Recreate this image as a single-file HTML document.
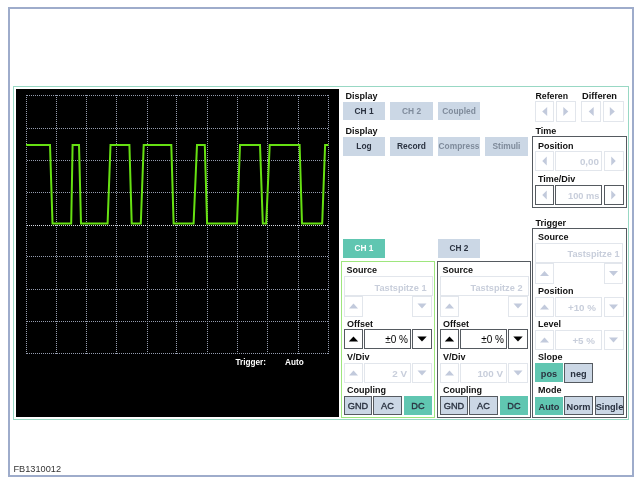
<!DOCTYPE html>
<html><head><meta charset="utf-8"><style>
html,body{margin:0;padding:0;background:#fff;width:641px;height:487px;overflow:hidden}
svg{display:block;font-family:"Liberation Sans", sans-serif;will-change:transform}
</style></head><body>
<svg width="641" height="487" viewBox="0 0 641 487" shape-rendering="crispEdges">
<rect x="9" y="8" width="624" height="468" fill="none" stroke="#9eaccb" stroke-width="2"/>
<rect x="13.5" y="86.5" width="615" height="333" fill="none" stroke="#98d8c4" stroke-width="1"/>
<rect x="16" y="89" width="323" height="328" fill="#000"/>
<line x1="26.5" y1="95" x2="26.5" y2="354" stroke="#959cae" stroke-width="1" stroke-dasharray="1,1"/>
<line x1="56.5" y1="95" x2="56.5" y2="354" stroke="#959cae" stroke-width="1" stroke-dasharray="1,1"/>
<line x1="86.5" y1="95" x2="86.5" y2="354" stroke="#959cae" stroke-width="1" stroke-dasharray="1,1"/>
<line x1="116.5" y1="95" x2="116.5" y2="354" stroke="#959cae" stroke-width="1" stroke-dasharray="1,1"/>
<line x1="147.5" y1="95" x2="147.5" y2="354" stroke="#959cae" stroke-width="1" stroke-dasharray="1,1"/>
<line x1="176.5" y1="95" x2="176.5" y2="354" stroke="#959cae" stroke-width="1" stroke-dasharray="1,1"/>
<line x1="207.5" y1="95" x2="207.5" y2="354" stroke="#959cae" stroke-width="1" stroke-dasharray="1,1"/>
<line x1="237.5" y1="95" x2="237.5" y2="354" stroke="#959cae" stroke-width="1" stroke-dasharray="1,1"/>
<line x1="267.5" y1="95" x2="267.5" y2="354" stroke="#959cae" stroke-width="1" stroke-dasharray="1,1"/>
<line x1="298.5" y1="95" x2="298.5" y2="354" stroke="#959cae" stroke-width="1" stroke-dasharray="1,1"/>
<line x1="328.5" y1="95" x2="328.5" y2="354" stroke="#959cae" stroke-width="1" stroke-dasharray="1,1"/>
<line x1="26" y1="95.5" x2="329" y2="95.5" stroke="#959cae" stroke-width="1" stroke-dasharray="1,1" stroke-dashoffset="1"/>
<line x1="26" y1="128.5" x2="329" y2="128.5" stroke="#959cae" stroke-width="1" stroke-dasharray="1,1" stroke-dashoffset="1"/>
<line x1="26" y1="160.5" x2="329" y2="160.5" stroke="#959cae" stroke-width="1" stroke-dasharray="1,1" stroke-dashoffset="1"/>
<line x1="26" y1="192.5" x2="329" y2="192.5" stroke="#959cae" stroke-width="1" stroke-dasharray="1,1" stroke-dashoffset="1"/>
<line x1="26" y1="225.5" x2="329" y2="225.5" stroke="#d8dce4" stroke-width="1" stroke-dasharray="1,1" stroke-dashoffset="1"/>
<line x1="26" y1="256.5" x2="329" y2="256.5" stroke="#959cae" stroke-width="1" stroke-dasharray="1,1" stroke-dashoffset="1"/>
<line x1="26" y1="289.5" x2="329" y2="289.5" stroke="#959cae" stroke-width="1" stroke-dasharray="1,1" stroke-dashoffset="1"/>
<line x1="26" y1="321.5" x2="329" y2="321.5" stroke="#959cae" stroke-width="1" stroke-dasharray="1,1" stroke-dashoffset="1"/>
<line x1="26" y1="353.5" x2="329" y2="353.5" stroke="#959cae" stroke-width="1" stroke-dasharray="1,1" stroke-dashoffset="1"/>
<polyline points="26,145 50,145 52.5,223.4 71.2,223.4 72.6,145 79,145 81,223.4 107.6,223.4 110.5,145 129.4,145 131.7,223.4 140.8,223.4 143.7,145 171.3,145 173.6,223.4 193.6,223.4 197,145 204.8,145 207.1,223.4 237,223.4 240,145 260,145 262.8,223.4 266.2,223.4 269.7,145 299.6,145 302,223.4 322.2,223.4 325.1,145 328.4,145" fill="none" stroke="#66e012" stroke-width="2" stroke-linejoin="miter" shape-rendering="geometricPrecision"/>
<text x="235.5" y="365" font-size="8.2" font-weight="bold" fill="#fff" text-anchor="start" >Trigger:</text>
<text x="285" y="365" font-size="8.2" font-weight="bold" fill="#fff" text-anchor="start" >Auto</text>
<text x="345.5" y="99" font-size="9" font-weight="bold" fill="#111" text-anchor="start" >Display</text>
<rect x="343" y="102" width="42" height="18" fill="#cbd7e5"/>
<text x="364.0" y="114" font-size="8.4" font-weight="bold" fill="#2a3240" text-anchor="middle" >CH 1</text>
<rect x="390" y="102" width="43" height="18" fill="#cbd7e5"/>
<text x="411.5" y="114" font-size="8.4" font-weight="bold" fill="#7f8b9b" text-anchor="middle" >CH 2</text>
<rect x="438" y="102" width="42" height="18" fill="#cbd7e5"/>
<text x="459.0" y="114" font-size="8.4" font-weight="bold" fill="#7f8b9b" text-anchor="middle" >Coupled</text>
<text x="345.5" y="133.5" font-size="9" font-weight="bold" fill="#111" text-anchor="start" >Display</text>
<rect x="343" y="137" width="42" height="19" fill="#cbd7e5"/>
<text x="364.0" y="149" font-size="8.4" font-weight="bold" fill="#2a3240" text-anchor="middle" >Log</text>
<rect x="390" y="137" width="43" height="19" fill="#cbd7e5"/>
<text x="411.5" y="149" font-size="8.4" font-weight="bold" fill="#2a3240" text-anchor="middle" >Record</text>
<rect x="438" y="137" width="42" height="19" fill="#cbd7e5"/>
<text x="459.0" y="149" font-size="8.4" font-weight="bold" fill="#7f8b9b" text-anchor="middle" >Compress</text>
<rect x="485" y="137" width="43" height="19" fill="#cbd7e5"/>
<text x="506.5" y="149" font-size="8.4" font-weight="bold" fill="#7f8b9b" text-anchor="middle" >Stimuli</text>
<text x="535.5" y="98.5" font-size="9" font-weight="bold" fill="#111" text-anchor="start" textLength="32.5" lengthAdjust="spacingAndGlyphs">Referen</text>
<text x="582" y="98.5" font-size="9" font-weight="bold" fill="#111" text-anchor="start" textLength="35" lengthAdjust="spacingAndGlyphs">Differen</text>
<rect x="535.5" y="101.5" width="18" height="20" fill="#fff" stroke="#e2e6ec" stroke-width="1"/>
<polygon points="542.2,111.5 547.2,107.0 547.2,116.0" fill="#c2cadc" shape-rendering="geometricPrecision"/>
<rect x="556.5" y="101.5" width="19" height="20" fill="#fff" stroke="#e2e6ec" stroke-width="1"/>
<polygon points="568.3,111.5 563.3,107.0 563.3,116.0" fill="#c2cadc" shape-rendering="geometricPrecision"/>
<rect x="581.5" y="101.5" width="19" height="20" fill="#fff" stroke="#e2e6ec" stroke-width="1"/>
<polygon points="588.7,111.5 593.7,107.0 593.7,116.0" fill="#c2cadc" shape-rendering="geometricPrecision"/>
<rect x="603.5" y="101.5" width="20" height="20" fill="#fff" stroke="#e2e6ec" stroke-width="1"/>
<polygon points="614.8,111.5 609.8,107.0 609.8,116.0" fill="#c2cadc" shape-rendering="geometricPrecision"/>
<text x="535.5" y="133.5" font-size="9" font-weight="bold" fill="#111" text-anchor="start" >Time</text>
<rect x="532.5" y="136.5" width="94" height="71" fill="none" stroke="#555a60" stroke-width="1"/>
<text x="538" y="148.5" font-size="9" font-weight="bold" fill="#111" text-anchor="start" >Position</text>
<rect x="535.5" y="151.5" width="18" height="19" fill="none" stroke="#e2e6ec" stroke-width="1"/>
<rect x="555.5" y="151.5" width="46" height="19" fill="none" stroke="#e2e6ec" stroke-width="1"/>
<rect x="604.5" y="151.5" width="19" height="19" fill="none" stroke="#e2e6ec" stroke-width="1"/>
<polygon points="542.25,161 546.75,156.5 546.75,165.5" fill="#c2cadc" shape-rendering="geometricPrecision"/>
<polygon points="615.75,161 611.25,156.5 611.25,165.5" fill="#c2cadc" shape-rendering="geometricPrecision"/>
<text x="599" y="165" font-size="9.8" font-weight="bold" fill="#c8cedb" text-anchor="end" >0,00</text>
<text x="538" y="182" font-size="9" font-weight="bold" fill="#111" text-anchor="start" >Time/Div</text>
<rect x="535.5" y="185.5" width="18" height="19" fill="none" stroke="#555a60" stroke-width="1"/>
<rect x="555.5" y="185.5" width="46" height="19" fill="none" stroke="#555a60" stroke-width="1"/>
<rect x="604.5" y="185.5" width="19" height="19" fill="none" stroke="#555a60" stroke-width="1"/>
<polygon points="542.25,195 546.75,190.5 546.75,199.5" fill="#c2cadc" shape-rendering="geometricPrecision"/>
<polygon points="615.75,195 611.25,190.5 611.25,199.5" fill="#c2cadc" shape-rendering="geometricPrecision"/>
<text x="599.5" y="199" font-size="9.8" font-weight="bold" fill="#c8cedb" text-anchor="end" textLength="31.5" lengthAdjust="spacingAndGlyphs">100 ms</text>
<text x="535.5" y="225.5" font-size="9" font-weight="bold" fill="#111" text-anchor="start" >Trigger</text>
<rect x="532.5" y="228.5" width="94" height="189" fill="none" stroke="#555a60" stroke-width="1"/>
<text x="538" y="239.8" font-size="9" font-weight="bold" fill="#111" text-anchor="start" >Source</text>
<rect x="535.5" y="243.5" width="87" height="19" fill="none" stroke="#e2e6ec" stroke-width="1"/>
<text x="619.5" y="257" font-size="9.2" font-weight="bold" fill="#c8cedb" text-anchor="end" >Tastspitze 1</text>
<rect x="535.5" y="263.5" width="18" height="20" fill="none" stroke="#e2e6ec" stroke-width="1"/>
<rect x="604.5" y="263.5" width="18" height="20" fill="none" stroke="#e2e6ec" stroke-width="1"/>
<polygon points="544.5,271.0 540.0,276.0 549.0,276.0" fill="#c2cadc" shape-rendering="geometricPrecision"/>
<polygon points="613.5,276.0 609.0,271.0 618.0,271.0" fill="#c2cadc" shape-rendering="geometricPrecision"/>
<text x="538" y="294" font-size="9" font-weight="bold" fill="#111" text-anchor="start" >Position</text>
<rect x="535.5" y="297.5" width="18" height="19" fill="none" stroke="#e2e6ec" stroke-width="1"/>
<rect x="555.5" y="297.5" width="46" height="19" fill="none" stroke="#e2e6ec" stroke-width="1"/>
<rect x="604.5" y="297.5" width="19" height="19" fill="none" stroke="#e2e6ec" stroke-width="1"/>
<polygon points="544.5,304.5 540.0,309.5 549.0,309.5" fill="#c2cadc" shape-rendering="geometricPrecision"/>
<polygon points="613.5,309.5 609.0,304.5 618.0,304.5" fill="#c2cadc" shape-rendering="geometricPrecision"/>
<text x="596" y="311" font-size="9.8" font-weight="bold" fill="#c8cedb" text-anchor="end" >+10 %</text>
<text x="538" y="327" font-size="9" font-weight="bold" fill="#111" text-anchor="start" >Level</text>
<rect x="535.5" y="330.5" width="18" height="19" fill="none" stroke="#e2e6ec" stroke-width="1"/>
<rect x="555.5" y="330.5" width="46" height="19" fill="none" stroke="#e2e6ec" stroke-width="1"/>
<rect x="604.5" y="330.5" width="19" height="19" fill="none" stroke="#e2e6ec" stroke-width="1"/>
<polygon points="544.5,337.5 540.0,342.5 549.0,342.5" fill="#c2cadc" shape-rendering="geometricPrecision"/>
<polygon points="613.5,342.5 609.0,337.5 618.0,337.5" fill="#c2cadc" shape-rendering="geometricPrecision"/>
<text x="595" y="344" font-size="9.8" font-weight="bold" fill="#c8cedb" text-anchor="end" >+5 %</text>
<text x="538" y="360" font-size="9" font-weight="bold" fill="#111" text-anchor="start" >Slope</text>
<rect x="535" y="363" width="28" height="19" fill="#60c6b1"/>
<text x="549.0" y="376.5" font-size="9.2" font-weight="bold" fill="#2a3240" text-anchor="middle" >pos</text>
<rect x="564.5" y="363.5" width="28" height="19" fill="#cbd7e5" stroke="#555a60" stroke-width="1"/>
<text x="578.5" y="376.5" font-size="9.2" font-weight="bold" fill="#2a3240" text-anchor="middle" >neg</text>
<text x="538" y="393" font-size="9" font-weight="bold" fill="#111" text-anchor="start" >Mode</text>
<rect x="535" y="397" width="28" height="18" fill="#60c6b1"/>
<text x="549.0" y="410" font-size="9.2" font-weight="bold" fill="#2a3240" text-anchor="middle" >Auto</text>
<rect x="564.5" y="396.5" width="28" height="18" fill="#cbd7e5" stroke="#555a60" stroke-width="1"/>
<text x="578.5" y="410" font-size="9.2" font-weight="bold" fill="#2a3240" text-anchor="middle" >Norm</text>
<rect x="595.5" y="396.5" width="28" height="18" fill="#cbd7e5" stroke="#555a60" stroke-width="1"/>
<text x="609.5" y="410" font-size="9.2" font-weight="bold" fill="#2a3240" text-anchor="middle" >Single</text>
<rect x="343" y="239" width="42" height="19" fill="#60c6b1"/>
<text x="364.0" y="251.2" font-size="8.3" font-weight="bold" fill="#fff" text-anchor="middle" >CH 1</text>
<rect x="341.5" y="261.5" width="93" height="156" fill="none" stroke="#9ee67e" stroke-width="1"/>
<text x="346.6" y="272.7" font-size="9" font-weight="bold" fill="#111" text-anchor="start" >Source</text>
<rect x="344.5" y="276.5" width="88" height="19" fill="none" stroke="#e2e6ec" stroke-width="1"/>
<text x="426.5" y="290.7" font-size="9.2" font-weight="bold" fill="#c8cedb" text-anchor="end" >Tastspitze 1</text>
<rect x="344.5" y="296.5" width="18" height="20" fill="none" stroke="#e2e6ec" stroke-width="1"/>
<rect x="412.5" y="296.5" width="19" height="20" fill="none" stroke="#e2e6ec" stroke-width="1"/>
<polygon points="353.5,303.5 349.0,308.5 358.0,308.5" fill="#c2cadc" shape-rendering="geometricPrecision"/>
<polygon points="422,308.5 417.5,303.5 426.5,303.5" fill="#c2cadc" shape-rendering="geometricPrecision"/>
<text x="347" y="326.7" font-size="9" font-weight="bold" fill="#111" text-anchor="start" >Offset</text>
<rect x="344.5" y="329.5" width="18" height="19" fill="none" stroke="#555a60" stroke-width="1"/>
<rect x="364.5" y="329.5" width="46" height="19" fill="none" stroke="#555a60" stroke-width="1"/>
<rect x="412.5" y="329.5" width="19" height="19" fill="none" stroke="#555a60" stroke-width="1"/>
<polygon points="353.5,336.4 348.8,341.6 358.2,341.6" fill="#000" shape-rendering="geometricPrecision"/>
<polygon points="422,341.6 417.3,336.4 426.7,336.4" fill="#000" shape-rendering="geometricPrecision"/>
<text x="408" y="342.6" font-size="10" font-weight="normal" fill="#000" text-anchor="end" >±0 %</text>
<text x="347" y="359.5" font-size="9" font-weight="bold" fill="#111" text-anchor="start" >V/Div</text>
<rect x="344.5" y="363.5" width="18" height="19" fill="none" stroke="#e2e6ec" stroke-width="1"/>
<rect x="364.5" y="363.5" width="46" height="19" fill="none" stroke="#e2e6ec" stroke-width="1"/>
<rect x="412.5" y="363.5" width="19" height="19" fill="none" stroke="#e2e6ec" stroke-width="1"/>
<polygon points="353.5,370.5 349.0,375.5 358.0,375.5" fill="#c2cadc" shape-rendering="geometricPrecision"/>
<polygon points="422,375.5 417.5,370.5 426.5,370.5" fill="#c2cadc" shape-rendering="geometricPrecision"/>
<text x="407" y="377" font-size="9.8" font-weight="bold" fill="#c8cedb" text-anchor="end" >2 V</text>
<text x="347" y="392.9" font-size="9" font-weight="bold" fill="#111" text-anchor="start" >Coupling</text>
<rect x="344.5" y="396.5" width="27" height="18" fill="#cbd7e5" stroke="#555a60" stroke-width="1"/>
<text x="358" y="409" font-size="9.2" font-weight="normal" fill="#2a3240" text-anchor="middle" stroke="#2a3240" stroke-width="0.35">GND</text>
<rect x="373.5" y="396.5" width="28" height="18" fill="#cbd7e5" stroke="#555a60" stroke-width="1"/>
<text x="387.5" y="409" font-size="9.2" font-weight="normal" fill="#2a3240" text-anchor="middle" stroke="#2a3240" stroke-width="0.35">AC</text>
<rect x="404" y="396" width="28" height="19" fill="#60c6b1"/>
<text x="418" y="409" font-size="9.2" font-weight="normal" fill="#2a3240" text-anchor="middle" stroke="#2a3240" stroke-width="0.35">DC</text>
<rect x="438" y="239" width="42" height="19" fill="#cbd7e5"/>
<text x="459.0" y="251.2" font-size="8.3" font-weight="bold" fill="#2a3240" text-anchor="middle" >CH 2</text>
<rect x="437.5" y="261.5" width="93" height="156" fill="none" stroke="#555a60" stroke-width="1"/>
<text x="442.6" y="272.7" font-size="9" font-weight="bold" fill="#111" text-anchor="start" >Source</text>
<rect x="440.5" y="276.5" width="88" height="19" fill="none" stroke="#e2e6ec" stroke-width="1"/>
<text x="522.5" y="290.7" font-size="9.2" font-weight="bold" fill="#c8cedb" text-anchor="end" >Tastspitze 2</text>
<rect x="440.5" y="296.5" width="18" height="20" fill="none" stroke="#e2e6ec" stroke-width="1"/>
<rect x="508.5" y="296.5" width="19" height="20" fill="none" stroke="#e2e6ec" stroke-width="1"/>
<polygon points="449.5,303.5 445.0,308.5 454.0,308.5" fill="#c2cadc" shape-rendering="geometricPrecision"/>
<polygon points="518,308.5 513.5,303.5 522.5,303.5" fill="#c2cadc" shape-rendering="geometricPrecision"/>
<text x="443" y="326.7" font-size="9" font-weight="bold" fill="#111" text-anchor="start" >Offset</text>
<rect x="440.5" y="329.5" width="18" height="19" fill="none" stroke="#555a60" stroke-width="1"/>
<rect x="460.5" y="329.5" width="46" height="19" fill="none" stroke="#555a60" stroke-width="1"/>
<rect x="508.5" y="329.5" width="19" height="19" fill="none" stroke="#555a60" stroke-width="1"/>
<polygon points="449.5,336.4 444.8,341.6 454.2,341.6" fill="#000" shape-rendering="geometricPrecision"/>
<polygon points="518,341.6 513.3,336.4 522.7,336.4" fill="#000" shape-rendering="geometricPrecision"/>
<text x="504" y="342.6" font-size="10" font-weight="normal" fill="#000" text-anchor="end" >±0 %</text>
<text x="443" y="359.5" font-size="9" font-weight="bold" fill="#111" text-anchor="start" >V/Div</text>
<rect x="440.5" y="363.5" width="18" height="19" fill="none" stroke="#e2e6ec" stroke-width="1"/>
<rect x="460.5" y="363.5" width="46" height="19" fill="none" stroke="#e2e6ec" stroke-width="1"/>
<rect x="508.5" y="363.5" width="19" height="19" fill="none" stroke="#e2e6ec" stroke-width="1"/>
<polygon points="449.5,370.5 445.0,375.5 454.0,375.5" fill="#c2cadc" shape-rendering="geometricPrecision"/>
<polygon points="518,375.5 513.5,370.5 522.5,370.5" fill="#c2cadc" shape-rendering="geometricPrecision"/>
<text x="503" y="377" font-size="9.8" font-weight="bold" fill="#c8cedb" text-anchor="end" >100 V</text>
<text x="443" y="392.9" font-size="9" font-weight="bold" fill="#111" text-anchor="start" >Coupling</text>
<rect x="440.5" y="396.5" width="27" height="18" fill="#cbd7e5" stroke="#555a60" stroke-width="1"/>
<text x="454" y="409" font-size="9.2" font-weight="normal" fill="#2a3240" text-anchor="middle" stroke="#2a3240" stroke-width="0.35">GND</text>
<rect x="469.5" y="396.5" width="28" height="18" fill="#cbd7e5" stroke="#555a60" stroke-width="1"/>
<text x="483.5" y="409" font-size="9.2" font-weight="normal" fill="#2a3240" text-anchor="middle" stroke="#2a3240" stroke-width="0.35">AC</text>
<rect x="500" y="396" width="28" height="19" fill="#60c6b1"/>
<text x="514" y="409" font-size="9.2" font-weight="normal" fill="#2a3240" text-anchor="middle" stroke="#2a3240" stroke-width="0.35">DC</text>
<text x="13.5" y="471.7" font-size="9.2" font-weight="normal" fill="#333" text-anchor="start" >FB1310012</text>
</svg></body></html>
